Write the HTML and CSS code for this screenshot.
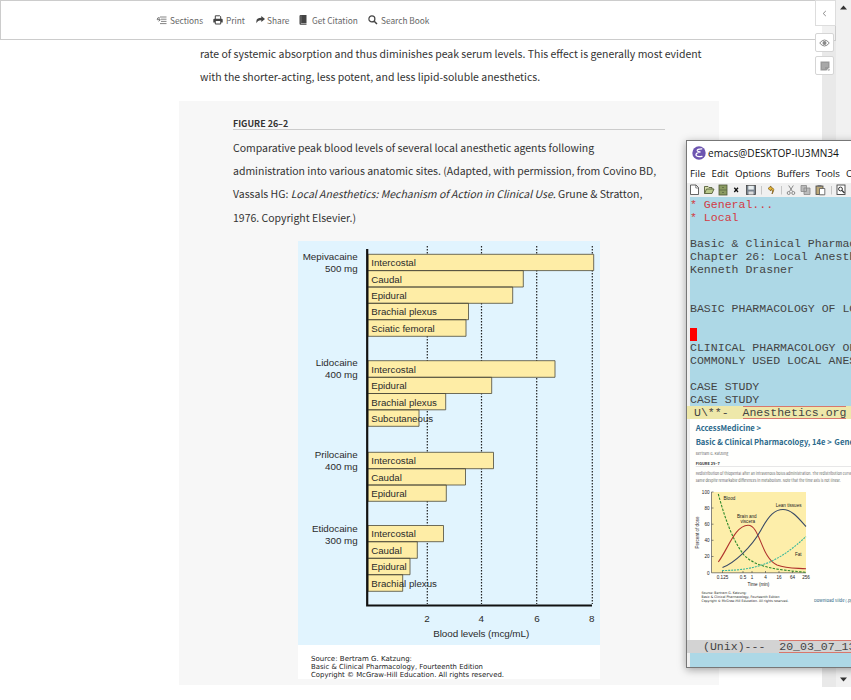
FILE: index.html
```
<!DOCTYPE html>
<html lang="en">
<head>
<meta charset="utf-8">
<title>Local Anesthetics</title>
<link rel="stylesheet" href="styles.css">
</head>
<body>
<div class="page">
  <header class="toolbar">
    <span class="tool t1"><svg width="11" height="9" viewBox="0 0 11 9"><path d="M4 1H10.500M5 3.200H10.500M5 5.400H10.500M4 7.600H10.500" stroke="#777" stroke-width=".9"/><path d="M3.500 1.500Q1 1.500 1.200 3.700H4M2.700 2.200L4.300 3.700L2.700 5.400" fill="none" stroke="#777"/></svg><span>Sections</span></span>
    <span class="tool t2"><svg width="10" height="10" viewBox="0 0 10 10"><path d="M2.300 4V.8H6.800L7.700 1.700V4" fill="none" stroke="#444"/><path d="M1.200 3.800H8.800Q9.700 3.800 9.700 4.800V7.500H8V6H2V7.500H.3V4.800Q.3 3.800 1.200 3.800Z" fill="#444"/><path d="M2.300 6V9H7.700V6" fill="none" stroke="#444"/></svg><span>Print</span></span>
    <span class="tool t3"><svg width="9" height="8" viewBox="0 0 9 8"><path d="M5.300 0L9 3L5.300 6V4.200Q1.500 4.100 .6 7.300Q-.8 1.900 5.300 1.800Z" fill="#444"/></svg><span>Share</span></span>
    <span class="tool t4"><svg width="8" height="10" viewBox="0 0 8 10"><path d="M1.500 0H7.500V8H1.800V8.600H7.500V9.700H1.500Q.5 9.700 .5 8.500V1.200Q.5 0 1.500 0Z" fill="#444"/><path d="M2 .5V8" stroke="#999" stroke-width=".5"/></svg><span>Get Citation</span></span>
    <span class="tool t5"><svg width="10" height="10" viewBox="0 0 10 10"><circle cx="3.900" cy="3.900" r="3" fill="none" stroke="#444" stroke-width="1.200"/><path d="M6.200 6.200L9 9" stroke="#444" stroke-width="1.500"/></svg><span>Search Book</span></span>
  </header>

  <main class="article">
    <p class="intro">rate of systemic absorption and thus diminishes peak serum levels. This effect is generally most evident<br>with the shorter-acting, less potent, and less lipid-soluble anesthetics.</p>
    <section class="figure">
      <h2>FIGURE 26–2</h2>
      <p class="caption">Comparative peak blood levels of several local anesthetic agents following<br>administration into various anatomic sites. (Adapted, with permission, from Covino BD,<br>Vassals HG: <em>Local Anesthetics: Mechanism of Action in Clinical Use.</em> Grune &amp; Stratton,<br>1976. Copyright Elsevier.)</p>
      <svg class="chart" width="302" height="438" viewBox="298 241 302 438">
        <rect x="298" y="241" width="302" height="438" fill="#fff"/>
        <rect x="298" y="241" width="302" height="404" fill="#e1f4fe"/>
        <path d="M427.300 246V604M481.500 246V604M536.700 246V604M592.300 246V604" stroke="#222" stroke-width="1.200" stroke-dasharray="1.600 1.400"/>
        <g fill="#feeda6" stroke="#4c4a3a" stroke-width=".8">
          <path d="M368 254.300H593.700V270.600H368ZM368 270.600H523.300V287H368ZM368 287H512.700V303.300H368ZM368 303.300H468.500V319.700H368ZM368 319.700H466V336.300H368Z"/>
          <path d="M368 360.700H555V377.300H368ZM368 377.300H491.700V393.500H368ZM368 393.500H445.700V409.800H368ZM368 409.800H419V426.300H368Z"/>
          <path d="M368 452.300H493.500V468.700H368ZM368 468.700H465.500V485H368ZM368 485H446.300V501.300H368Z"/>
          <path d="M368 525.500H443.500V541.700H368ZM368 541.700H417.300V558.300H368ZM368 558.300H410V574.700H368ZM368 574.700H402.700V591.300H368Z"/>
        </g>
        <path d="M367.200 249V605.500H592" fill="none" stroke="#111" stroke-width="2.200"/>
        <g class="label">
          <text x="371.200" y="266.300">Intercostal</text><text x="371.200" y="283">Caudal</text><text x="371.200" y="299">Epidural</text><text x="371.200" y="315.200">Brachial plexus</text><text x="371.200" y="331.900">Sciatic femoral</text>
          <text x="371.200" y="373.300">Intercostal</text><text x="371.200" y="389.300">Epidural</text><text x="371.200" y="406.400">Brachial plexus</text><text x="371.200" y="422.400">Subcutaneous</text>
          <text x="371.200" y="464.300">Intercostal</text><text x="371.200" y="481">Caudal</text><text x="371.200" y="497">Epidural</text>
          <text x="371.200" y="537">Intercostal</text><text x="371.200" y="554">Caudal</text><text x="371.200" y="570.300">Epidural</text><text x="371.200" y="587.400">Brachial plexus</text>
        </g>
        <g class="label agent">
          <text x="357.700" y="260.400">Mepivacaine</text><text x="357.700" y="272.400">500 mg</text>
          <text x="357.700" y="366.400">Lidocaine</text><text x="357.700" y="378.200">400 mg</text>
          <text x="357.700" y="458.200">Prilocaine</text><text x="357.700" y="470">400 mg</text>
          <text x="357.700" y="531.800">Etidocaine</text><text x="357.700" y="543.700">300 mg</text>
        </g>
        <g class="label tick">
          <text x="427" y="622.300">2</text><text x="481.300" y="622.300">4</text><text x="537" y="622.300">6</text><text x="591.700" y="622.300">8</text>
          <text x="481.200" y="637.400" textLength="96">Blood levels (mcg/mL)</text>
        </g>
        <g class="source">
          <text x="311" y="660.700" textLength="101" lengthAdjust="spacingAndGlyphs">Source: Bertram G. Katzung:</text>
          <text x="311" y="669" textLength="172" lengthAdjust="spacingAndGlyphs">Basic &amp; Clinical Pharmacology, Fourteenth Edition</text>
          <text x="311" y="677.300" textLength="193" lengthAdjust="spacingAndGlyphs">Copyright © McGraw-Hill Education. All rights reserved.</text>
        </g>
      </svg>
    </section>
  </main>

  <div class="track"></div>
  <div class="scrollbar">
    <svg width="7" height="5" viewBox="0 0 7 5"><path d="M0 4.500L3.500 .5L7 4.500Z" fill="#333"/></svg>
    <svg width="7" height="5" viewBox="0 0 7 5"><path d="M0 .5L3.500 4.500L7 .5Z" fill="#333"/></svg>
  </div>
  <div class="rail">
    <div class="collapse"><svg width="5" height="7" viewBox="0 0 5 7"><path d="M3.800 1L1.200 3.500L3.800 6" fill="none" stroke="#888"/></svg></div>
    <div class="side-btn"><svg width="11" height="8" viewBox="0 0 11 8"><path d="M.7 4Q5.500-2 10.300 4Q5.500 10 .7 4Z" fill="none" stroke="#888"/><circle cx="5.500" cy="4" r="2" fill="#888"/></svg></div>
    <div class="side-btn"><svg width="10" height="10" viewBox="0 0 10 10"><path d="M.5 .5H9.500V6.500L6.500 9.500H.5Z" fill="#999"/><path d="M2 3H8M2 5H8M2 7H5" stroke="#ccc" stroke-width=".6"/><path d="M7.500 9.500L9.500 7.500V9.500Z" fill="#888"/></svg></div>
  </div>

  <aside class="emacs">
    <div class="title"><svg width="14" height="14" viewBox="0 0 14 14"><circle cx="7" cy="7" r="6.700" fill="#6d55b0"/><path d="M9.800 2.800Q5 3 5.200 4.700Q5.500 6 8.500 5.900Q3.800 6.800 4 9Q4.400 11.200 10 10.300" fill="none" stroke="#fff" stroke-width="1.300" stroke-linecap="round"/></svg><span>emacs@DESKTOP-IU3MN34</span></div>
    <div class="menu"><span>File</span><span>Edit</span><span>Options</span><span>Buffers</span><span>Tools</span><span>Org</span></div>
    <svg class="icons" width="165" height="14" viewBox="686 183 165 14">
      <path d="M690.500 185H696L698.500 187.500V194.500H690.500Z" fill="#fff" stroke="#555" stroke-width=".9"/><path d="M695.800 185V188H698.500" fill="none" stroke="#555" stroke-width=".7"/>
      <path d="M704.500 193.500V186.500H708L709 187.500H712V189" fill="#d8dfb0" stroke="#56603a" stroke-width=".9"/><path d="M704.500 193.500L706.500 189H714L712 193.500Z" fill="#b9c98b" stroke="#56603a" stroke-width=".9"/>
      <rect x="719" y="185" width="8" height="10" fill="#8b9b62" stroke="#4c5636" stroke-width=".8"/><path d="M719 190H727M722 187.500H724M722 192.500H724" stroke="#5c6745" stroke-width=".8"/>
      <path d="M734.300 187.800L738 192M738 187.800L734.300 192" stroke="#111" stroke-width="1.300"/>
      <rect x="746.500" y="185.500" width="9" height="9" fill="#7b8590" stroke="#444" stroke-width=".8"/><rect x="748.300" y="185.800" width="5.500" height="3.800" fill="#e8eef0"/><rect x="748.500" y="191.500" width="5" height="3" fill="#ddd"/>
      <path d="M761.500 186V194.500M781.500 186V194.500M831.500 186V194.500" stroke="#bbb" stroke-width=".8"/>
      <path d="M771 186L768 188.500L771 191V189.500Q773.500 189.500 772 194Q776 188 771 187.600Z" fill="#eabb37" stroke="#775514" stroke-width=".7"/>
      <path d="M788.700 185.500L792.500 191.500M793.300 185.500L789.500 191.500" stroke="#888"/><circle cx="788.700" cy="193" r="1.500" fill="none" stroke="#888"/><circle cx="793.300" cy="193" r="1.500" fill="none" stroke="#888"/>
      <path d="M801 185.500H806.500V191.500H801ZM804 188H810V194.500H804Z" fill="#bbb" stroke="#888" stroke-width=".8"/>
      <rect x="816" y="186" width="7" height="8.500" fill="#bca878" stroke="#444" stroke-width=".8"/><rect x="817.500" y="185" width="4" height="2" fill="#777"/><path d="M819.500 188.500H824.800V194.800H819.500Z" fill="#fff" stroke="#555" stroke-width=".8"/>
      <rect x="837" y="185" width="8" height="9.500" fill="#fff" stroke="#444" stroke-width=".9"/><circle cx="840.500" cy="189" r="1.900" fill="none" stroke="#333"/><path d="M842 190.500L844.500 193" stroke="#333" stroke-width="1.300"/>
    </svg>
    <div class="buffer"><pre><span class="head">* General...
* Local</span>

Basic &amp; Clinical Pharmacology
Chapter 26: Local Anesthetics
Kenneth Drasner


BASIC PHARMACOLOGY OF LOCAL

<i class="cursor"></i>
CLINICAL PHARMACOLOGY OF
COMMONLY USED LOCAL ANESTHETICS

CASE STUDY
CASE STUDY</pre></div>
    <div class="mode"><pre>U\**-  <span class="file">Anesthetics.org</span></pre></div>
    <div class="shot">
      <svg width="161" height="221" viewBox="690 419 161 221">
        <g class="crumb"><text x="695.700" y="430.600" textLength="65.500" lengthAdjust="spacingAndGlyphs">AccessMedicine &gt;</text><text x="695.700" y="445" textLength="136" lengthAdjust="spacingAndGlyphs">Basic &amp; Clinical Pharmacology, 14e &gt;</text><text x="834.300" y="445">General</text></g>
        <g class="tiny"><text x="695.700" y="455" textLength="32.500" lengthAdjust="spacingAndGlyphs">Bertram G. Katzung</text><text class="fig" x="695.700" y="465.300" textLength="24" lengthAdjust="spacingAndGlyphs">FIGURE 25–7</text>
        <text x="695.700" y="474.500" textLength="158" lengthAdjust="spacingAndGlyphs">Redistribution of thiopental after an intravenous bolus administration. The redistribution curves</text><text x="695.700" y="481.500" textLength="145" lengthAdjust="spacingAndGlyphs">same despite remarkable differences in metabolism. Note that the time axis is not linear.</text></g>
        <path d="M695.700 466.500H851" stroke="#ddd" stroke-width=".7"/>
        <rect x="711.500" y="492" width="94.500" height="81" fill="#fdeeaa"/>
        <path d="M711.500 492V572.800H806M711.500 492H713.500M711.500 508H713.500M711.500 524.200H713.500M711.500 540.300H713.500M711.500 556.500H713.500M722.500 573V571M743 573V571M752 573V571M765.500 573V571M779 573V571M792.500 573V571" fill="none" stroke="#555" stroke-width=".7"/>
        <g fill="none" stroke-width="1.100">
          <path d="M718.300 494C724 515 732 540 744 555C756 568 780 570 806 572.300" stroke="#2f8a2c" stroke-dasharray="2.500 1.300"/>
          <path d="M718.300 562C728 549 735 525.500 748 525.300C760 525 761 558 777 565C787 568.800 796 568 806 568.800" stroke="#b0342e"/>
          <path d="M722.500 567.500C734 563 751 548 761 530C769 515 775 509.500 783 509.500C792 509.500 799 519 806 526.500" stroke="#394a66"/>
          <path d="M722 570.500C760 570.500 781 560 806 536.500" stroke="#38b79b" stroke-dasharray="2 1"/>
        </g>
        <g class="mini">
          <text x="723.500" y="499.800">Blood</text><text x="775.700" y="507">Lean tissues</text><text x="737" y="518">Brain and</text><text x="740.500" y="522.700">viscera</text><text x="795" y="556">Fat</text>
          <g text-anchor="end"><text x="709.500" y="494">100</text><text x="709.500" y="509.700">80</text><text x="709.500" y="526">60</text><text x="709.500" y="542">40</text><text x="709.500" y="558">20</text><text x="709.500" y="574.500">0</text></g>
          <g text-anchor="middle"><text x="722.500" y="578.500">0.125</text><text x="743" y="578.500">0.5</text><text x="752" y="578.500">1</text><text x="765.500" y="578.500">4</text><text x="779" y="578.500">16</text><text x="792.500" y="578.500">64</text><text x="806" y="578.500">256</text><text x="758.500" y="585.800">Time (min)</text><text transform="translate(699.300 532.500)rotate(-90)">Percent of dose</text></g>
        </g>
        <g class="src"><text x="701.500" y="594" textLength="45" lengthAdjust="spacingAndGlyphs">Source: Bertram G. Katzung:</text><text x="701.500" y="597.700" textLength="78" lengthAdjust="spacingAndGlyphs">Basic &amp; Clinical Pharmacology, Fourteenth Edition</text><text x="701.500" y="601.500" textLength="87" lengthAdjust="spacingAndGlyphs">Copyright © McGraw-Hill Education. All rights reserved.</text></g>
        <text class="dl" x="814" y="601.800" textLength="42" lengthAdjust="spacingAndGlyphs">Download Slide (.ppt)</text>
      </svg>
    </div>
    <div class="mode dim"><pre>(Unix)---  <span class="file">20_03_07_1340</span></pre></div>
    <div class="echo"></div>
  </aside>
</div>
</body>
</html>
```
FILE: styles.css
```
* { box-sizing: border-box; }
html, body { margin: 0; background: #fff; }
pre, p, h2 { margin: 0; }
svg { display: block; flex: none; }
.page { position: relative; width: 851px; height: 700px; overflow: hidden; font-family: "Noto Sans CJK SC", sans-serif; color: #333; }
.toolbar { display: flex; align-items: center; height: 40px; width: 816px; padding-left: 155px; border: solid #ccc; border-width: 1px 0 1px 1px; }
.tool { display: flex; align-items: center; gap: 3px; font-size: 8.300px; line-height: 14px; color: #666; white-space: nowrap; }
.t1 { width: 57px; }
.t2 { width: 43px; }
.t3 { width: 43px; gap: 2px; }
.t4 { width: 69px; gap: 5px; }
.article { width: 720px; padding-left: 179px; }
.intro { padding: 2px 0 0 21px; height: 61px; font-size: 10.490px; line-height: 23.400px; white-space: nowrap; }
.figure { width: 540px; height: 584px; padding: 15px 54px 0; background: #f7f7f7; }
h2 { height: 14px; font-size: 8.900px; line-height: 15px; border-bottom: 1px solid #ccc; font-weight: 700; }
.caption { padding-top: 5.500px; height: 111px; font-size: 10.490px; line-height: 23.400px; white-space: nowrap; }
.chart { margin-left: 65px; }
.label { font: 9.700px "Liberation Sans", sans-serif; fill: #2b2b2b; }
.agent { text-anchor: end; font-size: 9.800px; }
.tick { text-anchor: middle; font-size: 9.900px; }
.source { font: 7px "DejaVu Sans", sans-serif; fill: #222; }
.track { position: absolute; left: 822px; top: 26px; width: 14px; height: 661px; background: #e9e9e9; }
.track::before { content: ""; display: block; height: 14px; background: #f1f1f1; border: solid #ccc; border-width: 0 1px 1px 0; }
.scrollbar { position: absolute; left: 836px; top: 0; width: 15px; height: 687px; padding: 5px 4px; background: #f1f1f1; display: flex; flex-direction: column; justify-content: space-between; }
.rail { position: absolute; left: 815px; top: 0; display: flex; flex-direction: column; align-items: flex-start; gap: 4px; }
.collapse { width: 21px; height: 26px; margin-bottom: 3px; padding-right: 2px; display: flex; align-items: center; justify-content: center; background: #fff; border: 1px solid #ddd; }
.side-btn { width: 19px; height: 19px; display: flex; align-items: center; justify-content: center; background: #fff; border: 1px solid #d5d5d5; border-radius: 2px; }
.emacs { position: absolute; left: 686px; top: 140px; width: 175px; height: 528px; background: #f0f0f0; border: 1px solid #777; box-shadow: 0 2px 8px rgba(0,0,0,.35); }
.title { height: 26px; padding: 0 0 2px 5px; display: flex; align-items: center; gap: 2px; background: #fff; font: 10.100px/14px "Open Sans", sans-serif; color: #111; }
.menu { height: 16px; padding: 0 0 2px 3px; display: flex; align-items: center; gap: 6.200px; background: #fff; font: 9.700px/14px "Open Sans", sans-serif; color: #111; }
.icons { margin-left: -1px; }
.buffer { height: 209px; margin-left: 3px; padding-top: 1px; background: #add8e6; overflow: hidden; }
pre { font: 11.550px/13px "Liberation Mono", monospace; color: #444; }
.head { color: #d23b45; }
.cursor { display: inline-block; width: 7px; height: 13px; background: #f00; vertical-align: top; }
.mode { height: 13px; padding-left: 7px; background: #eee8aa; overflow: hidden; }
.file { display: inline-block; height: 13px; border: solid #d8776c; border-width: 1px 0; line-height: 12px; }
.shot { margin-left: 3px; height: 221px; background: #fffffd; }
.dim { padding-left: 16px; background: #d3d3d3; }
.echo { height: 14px; margin-left: 3px; background: #add8e6; }
.crumb { font: 700 7.800px "Noto Sans CJK SC", sans-serif; fill: #2c6a8c; }
.tiny { font: 4px "Noto Sans CJK SC", sans-serif; fill: #666; }
.fig { font-weight: 700; fill: #333; }
.mini { font: 4.600px "Liberation Sans", sans-serif; fill: #222; }
.src { font: 3.400px "DejaVu Sans", sans-serif; fill: #222; }
.dl { font: 4px "Noto Sans CJK SC", sans-serif; fill: #17587a; }
```
